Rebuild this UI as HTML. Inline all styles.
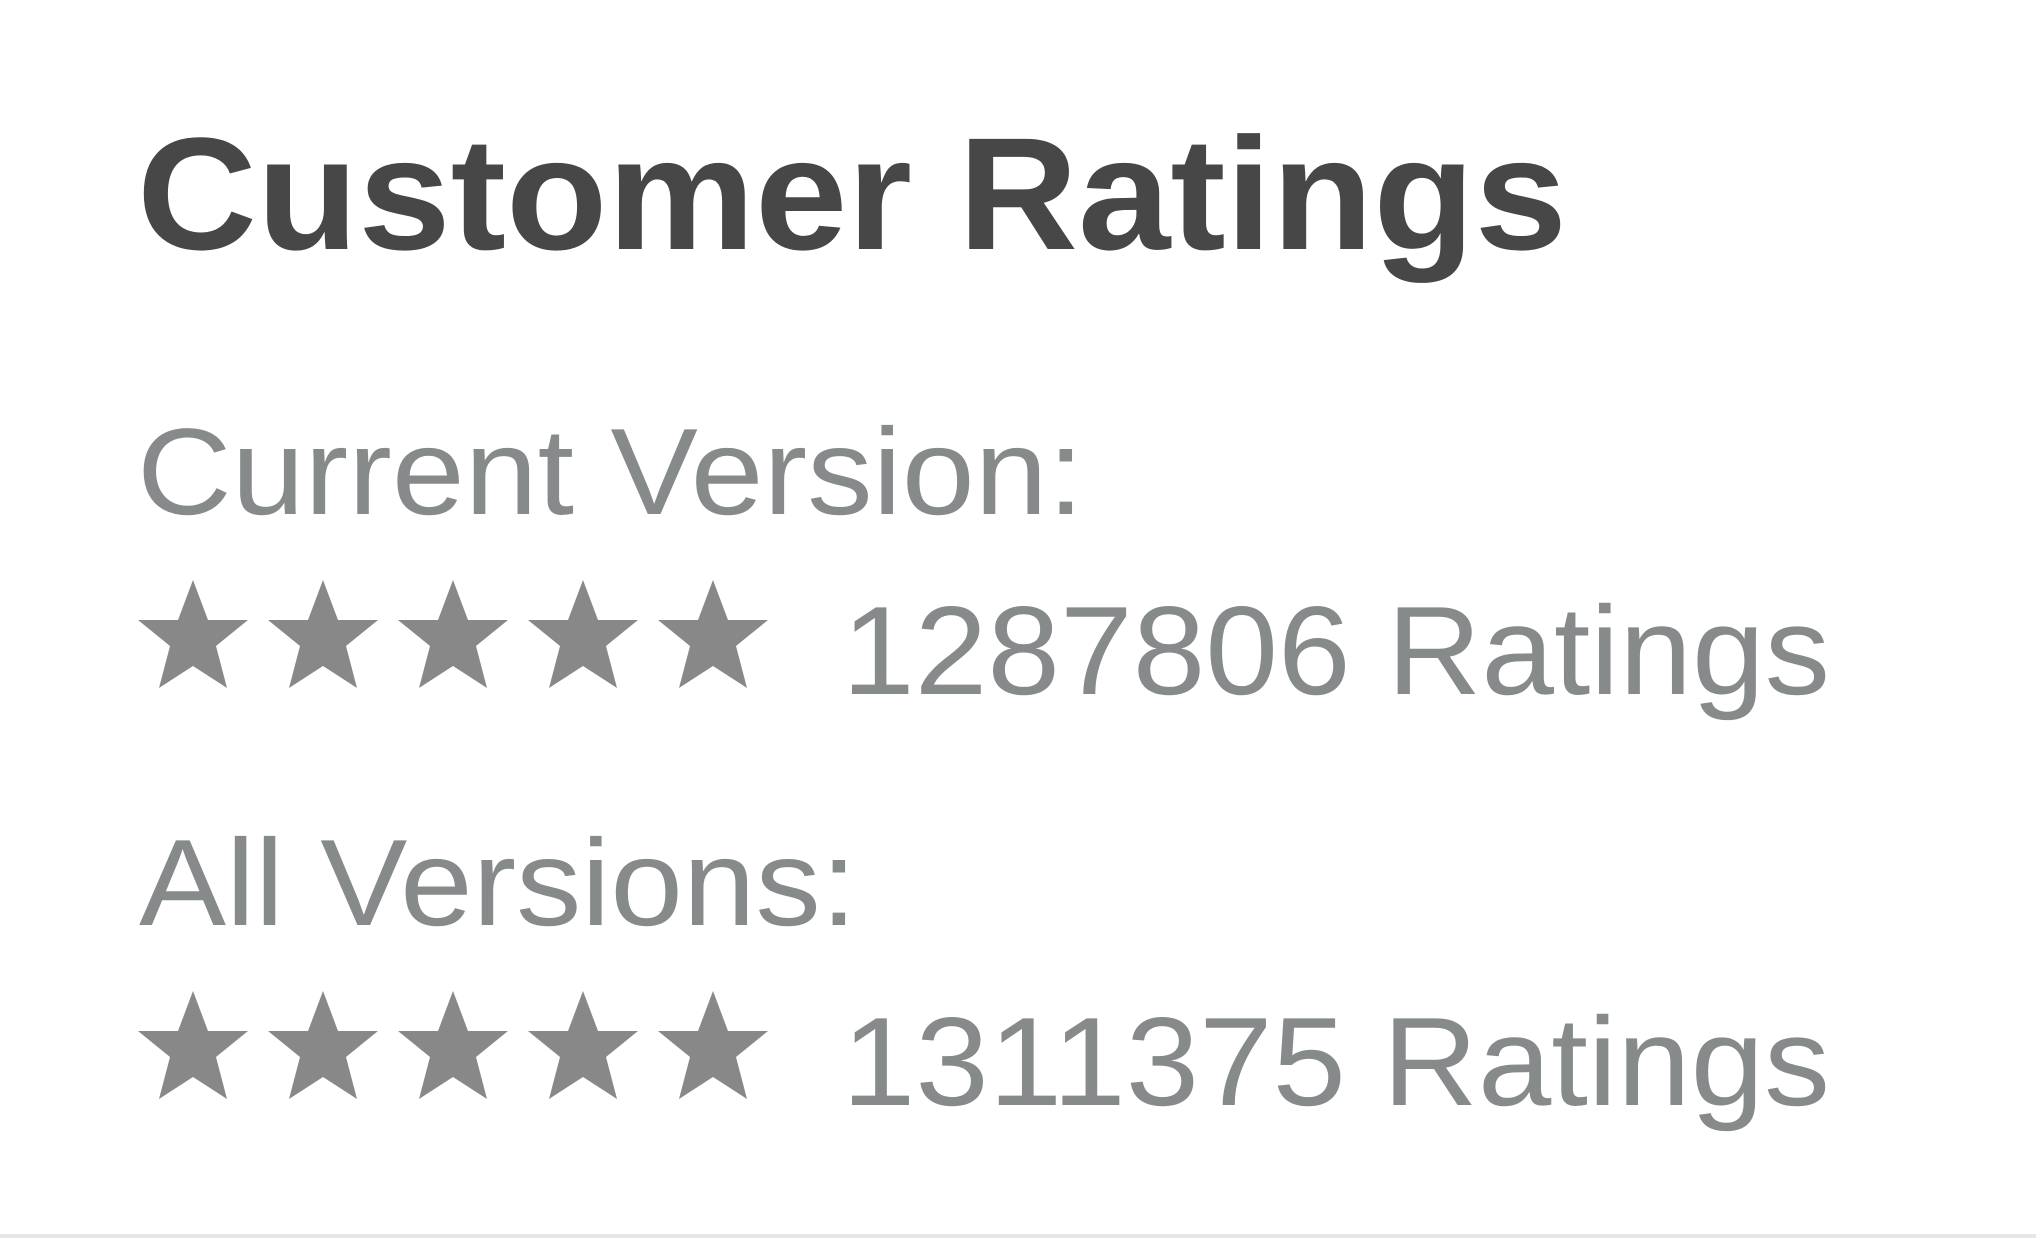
<!DOCTYPE html>
<html><head><meta charset="utf-8"><style>
html,body{margin:0;padding:0;background:#fff;width:2036px;height:1238px;overflow:hidden}
svg{display:block}
</style></head><body>
<svg width="2036" height="1238" viewBox="0 0 2036 1238" xmlns="http://www.w3.org/2000/svg">
<defs>
<polygon id="s" points="0,0 15,40 55,40 23,66 34,108 0,86 -34,108 -23,66 -55,40 -15,40" fill="#888888"/>
</defs>
<text x="137" y="249" font-family="Liberation Sans, sans-serif" font-weight="bold" font-size="160" fill="#474747" textLength="1430" lengthAdjust="spacingAndGlyphs">Customer Ratings</text>
<text x="137" y="514" font-family="Liberation Sans, sans-serif" font-size="123" fill="#878a8a" textLength="947" lengthAdjust="spacingAndGlyphs">Current Version:</text>
<g transform="translate(0,580)">
<use href="#s" x="193"/><use href="#s" x="323"/><use href="#s" x="453"/><use href="#s" x="583"/><use href="#s" x="713"/>
</g>
<text x="842" y="694" font-family="Liberation Sans, sans-serif" font-size="126" fill="#878a8a" textLength="988" lengthAdjust="spacingAndGlyphs">1287806 Ratings</text>
<text x="139" y="925" font-family="Liberation Sans, sans-serif" font-size="123" fill="#878a8a" textLength="718" lengthAdjust="spacingAndGlyphs">All Versions:</text>
<g transform="translate(0,991)">
<use href="#s" x="193"/><use href="#s" x="323"/><use href="#s" x="453"/><use href="#s" x="583"/><use href="#s" x="713"/>
</g>
<text x="842" y="1105" font-family="Liberation Sans, sans-serif" font-size="126" fill="#878a8a" textLength="988" lengthAdjust="spacingAndGlyphs">1311375 Ratings</text>
<rect x="0" y="1234" width="2036" height="4" fill="#e6e6e6"/>
</svg>
</body></html>
